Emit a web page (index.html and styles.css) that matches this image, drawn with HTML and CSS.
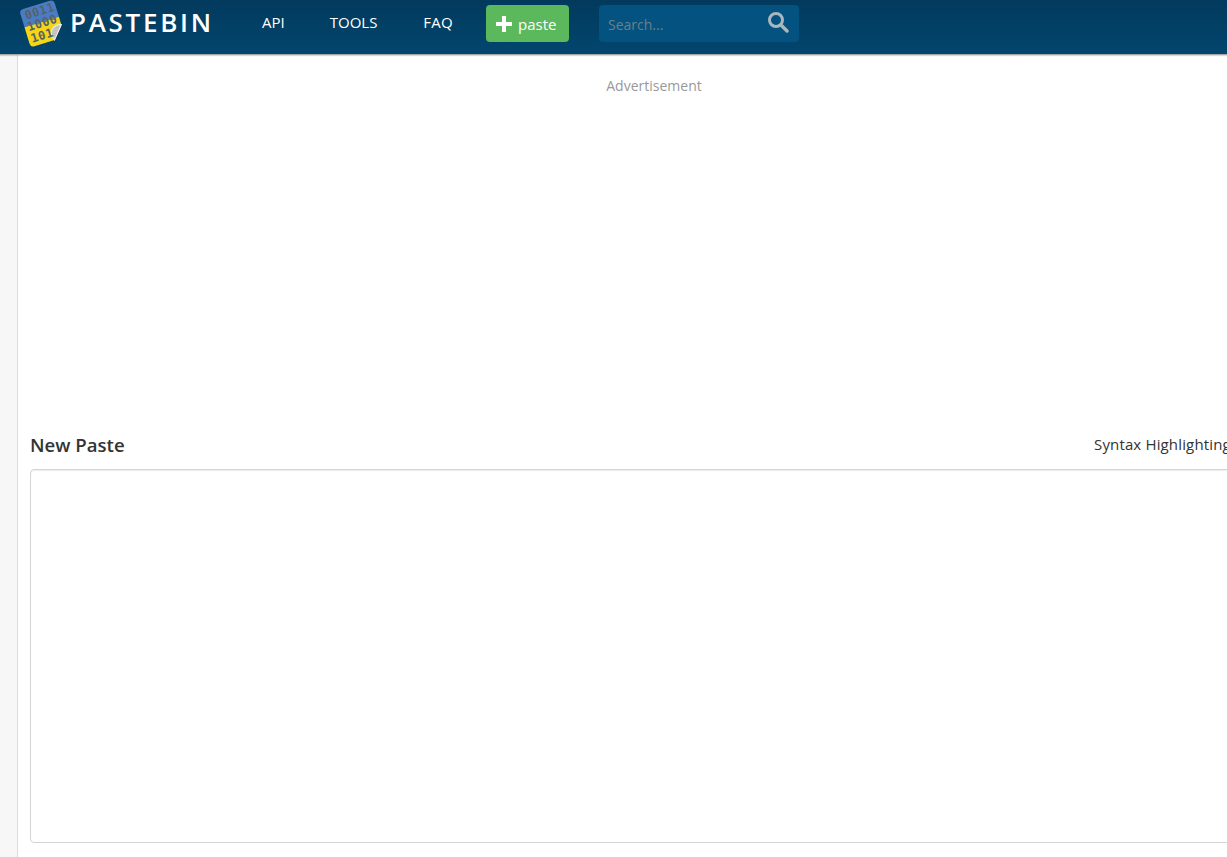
FILE: index.html
```html
<!DOCTYPE html>
<html lang="en">
<head>
  <meta charset="UTF-8">
  <title>Pastebin</title>
  <link rel="stylesheet" href="styles.css">
</head>
<body>
  <!-- Top bar -->
  <header class="header">
    <a class="logo" href="#">
      <svg class="logo-icon" width="47" height="48" viewBox="0 0 47 48">
        <g transform="rotate(-17 24 23)">
          <path d="M6 8 Q6 4 10 4 L38 4 Q42 4 42 8 L42 22 L6 22 Z" fill="#4a7cc4"/>
          <path d="M6 22 L42 22 L42 31 L31 43 L10 43 Q6 43 6 39 Z" fill="#f5d616"/>
          <path d="M42 30 L31 43 Q28 35 32 32 Q36 28 42 30 Z" fill="#c4c4c4" stroke="#f0f0f0" stroke-width="1"/>
          <text class="logo-bits" x="10" y="15">0011</text>
          <text class="logo-bits" x="9" y="27">1000</text>
          <text class="logo-bits" x="9" y="39">101</text>
        </g>
      </svg>
      <span class="logo-text">PASTEBIN</span>
    </a>
    <nav class="nav">
      <a href="#">API</a>
      <a href="#">TOOLS</a>
      <a href="#">FAQ</a>
    </nav>
    <a class="paste-button" href="#">
      <svg width="16" height="16" viewBox="0 0 16 16"><path d="M6 0h4v6h6v4h-6v6H6v-6H0V6h6z" fill="#fff"/></svg>
      paste
    </a>
    <div class="search">
      <span class="search-input">Search...</span>
      <svg width="22" height="22" viewBox="0 0 22 22" fill="none" stroke="#a9b7c0">
        <circle cx="9" cy="9" r="6.5" stroke-width="3"/>
        <path d="M14 14l6 6" stroke-width="3.4" stroke-linecap="round"/>
      </svg>
    </div>
  </header>

  <div class="page">
    <aside class="sidebar"></aside>
    <main class="content">
      <div class="ad-label">Advertisement</div>
      <div class="ad-space"></div>
      <div class="paste-head">
        <h1 class="paste-title">New Paste</h1>
        <div class="paste-syntax">Syntax Highlighting</div>
      </div>
      <textarea class="paste-text"></textarea>
    </main>
  </div>
</body>
</html>
```

FILE: styles.css
```css
* {
  margin: 0;
  padding: 0;
  box-sizing: border-box;
}

html, body {
  height: 100%;
  overflow: hidden;
}

body {
  font-family: "Open Sans", "Noto Sans", sans-serif;
  background: #fff;
  color: #333;
}

a {
  text-decoration: none;
  color: inherit;
}

.header {
  position: relative;
  height: 55px;
  display: flex;
  align-items: flex-start;
  background: linear-gradient(180deg, #023a5d 0%, #02466e 100%);
  border-bottom: 1px solid #a8a8a8;
  box-shadow: 0 1px 1px rgba(0, 0, 0, 0.15);
  color: #fff;
}

.logo {
  display: flex;
  align-items: center;
  width: 246px;
  height: 48px;
  padding-left: 18px;
}

.logo-icon {
  flex-shrink: 0;
}

.logo-bits {
  font-family: "DejaVu Sans Mono", monospace;
  font-size: 12px;
  font-weight: bold;
  letter-spacing: 0.4px;
  fill: #56616a;
}

.logo-text {
  font-size: 26px;
  font-weight: 600;
  letter-spacing: 2.7px;
  margin-left: 5px;
  margin-top: -4px;
  line-height: 48px;
}

.nav {
  display: flex;
  gap: 45px;
  width: 240px;
  padding-left: 16px;
  font-size: 15px;
  line-height: 45px;
}

.nav a:last-child {
  margin-left: 1px;
  letter-spacing: 0.2px;
}

.paste-button {
  display: flex;
  align-items: center;
  gap: 6px;
  width: 83px;
  height: 37px;
  margin-top: 5px;
  padding-left: 10px;
  background: #5cb85c;
  border-radius: 4px;
  font-size: 15px;
}

.search {
  display: flex;
  align-items: center;
  justify-content: space-between;
  width: 200px;
  height: 37px;
  margin-top: 5px;
  margin-left: 30px;
  padding: 0 10px 0 9px;
  background: #03527f;
  border-radius: 4px;
}

.search-input {
  padding-top: 2px;
  font-size: 14px;
  color: #6f7f89;
}

.search svg {
  margin-top: -4px;
}

.page {
  display: flex;
  width: 1290px;
  height: 802px;
}

.sidebar {
  width: 18px;
  flex-shrink: 0;
  background: #f7f7f7;
  border-right: 1px solid #dcdcdc;
}

.content {
  width: 1272px;
  flex-shrink: 0;
  padding: 0 12px;
}

.ad-label {
  padding-top: 21px;
  font-size: 14px;
  line-height: 20px;
  color: #999;
  text-align: center;
}

.ad-space {
  height: 315px;
}

.paste-head {
  display: flex;
  justify-content: space-between;
  align-items: center;
  height: 58px;
  padding-top: 20px;
  padding-bottom: 11px;
}

.paste-title {
  font-size: 18.6px;
  font-weight: 600;
  color: #333;
}

.paste-syntax {
  width: 184px;
  margin-top: -2px;
  font-size: 15px;
  letter-spacing: 0.15px;
  white-space: nowrap;
}

.paste-text {
  display: block;
  width: 100%;
  height: 374px;
  border: 1px solid #d5d5d5;
  border-radius: 4px;
  box-shadow: inset 0 1px 1px rgba(0, 0, 0, 0.075);
  resize: none;
  outline: none;
  background: #fff;
}
```
